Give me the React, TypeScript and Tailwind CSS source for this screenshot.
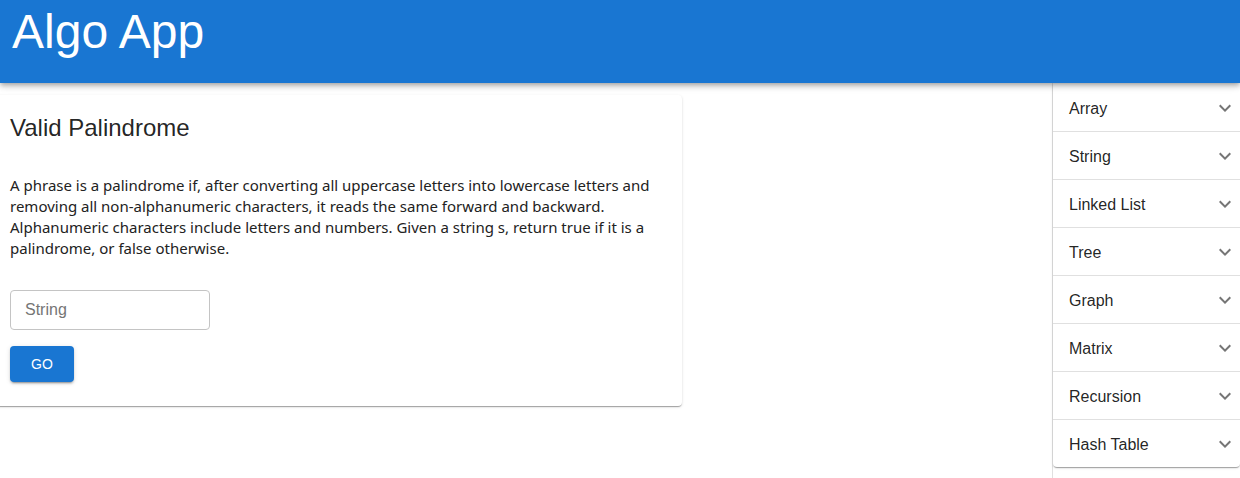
import React from 'react'

const TOPICS = ['Array', 'String', 'Linked List', 'Tree', 'Graph', 'Matrix', 'Recursion', 'Hash Table']

function ExpandMore() {
  return (
    <svg viewBox="0 0 24 24" className="w-6 h-6 fill-[rgba(0,0,0,0.54)]">
      <path d="M16.59 8.59 12 13.17 7.41 8.59 6 10l6 6 6-6z" />
    </svg>
  )
}

export default function App() {
  return (
    <div className="min-h-[478px] bg-white font-['Liberation_Sans',Arial,sans-serif] text-[rgba(0,0,0,0.87)]">
      <header className="h-[83px] bg-[#1976d2] text-white shadow-[0_2px_4px_-1px_rgba(0,0,0,0.2),0_4px_5px_0_rgba(0,0,0,0.14),0_1px_10px_0_rgba(0,0,0,0.12)] relative z-10">
        <h1 className="text-[48px] leading-none pl-3 pt-[8px]">Algo App</h1>
      </header>

      <div className="flex">
        {/* main card */}
        <div className="flex-1 pt-3">
          <div className="w-[686px] ml-[-4px] pl-[14px] pr-4 pt-[17px] pb-[24px] bg-white rounded shadow-[0_2px_1px_-1px_rgba(0,0,0,0.2),0_1px_1px_0_rgba(0,0,0,0.14),0_1px_3px_0_rgba(0,0,0,0.12)]">
            <h2 className="text-[24px] leading-[32px]">Valid Palindrome</h2>
            <p className="mt-[31px] text-[15px] leading-[21px] font-['Noto_Sans',sans-serif] text-[#222]">
              A phrase is a palindrome if, after converting all uppercase letters into lowercase letters and removing all non-alphanumeric characters, it reads the same forward and backward. Alphanumeric characters include letters and numbers. Given a string s, return true if it is a palindrome, or false otherwise.
            </p>
            <input
              placeholder="String"
              className="mt-[31px] block w-[200px] h-10 rounded border border-[#c4c4c4] px-[14px] text-[16px] placeholder:text-[#757575] outline-none"
            />
            <button className="mt-4 block w-16 h-9 rounded bg-[#1976d2] text-white text-[14px] uppercase shadow-[0_3px_1px_-2px_rgba(0,0,0,0.2),0_2px_2px_0_rgba(0,0,0,0.14),0_1px_5px_0_rgba(0,0,0,0.12)]">
              Go
            </button>
          </div>
        </div>

        {/* sidebar */}
        <aside className="w-[188px] min-h-[395px] border-l border-[#e0e0e0] pt-[1px]">
          <div className="rounded-b shadow-[0_2px_1px_-1px_rgba(0,0,0,0.2),0_1px_1px_0_rgba(0,0,0,0.14),0_1px_3px_0_rgba(0,0,0,0.12)]">
            {TOPICS.map((t, i) => (
              <div
                key={t}
                className={`flex items-center justify-between pl-4 pr-[3px] text-[16px] ${i > 0 ? 'h-12 border-t border-[rgba(0,0,0,0.12)]' : 'h-[47px]'}`}
              >
                <span className="pt-[2px]">{t}</span>
                <ExpandMore />
              </div>
            ))}
          </div>
        </aside>
      </div>
    </div>
  )
}
